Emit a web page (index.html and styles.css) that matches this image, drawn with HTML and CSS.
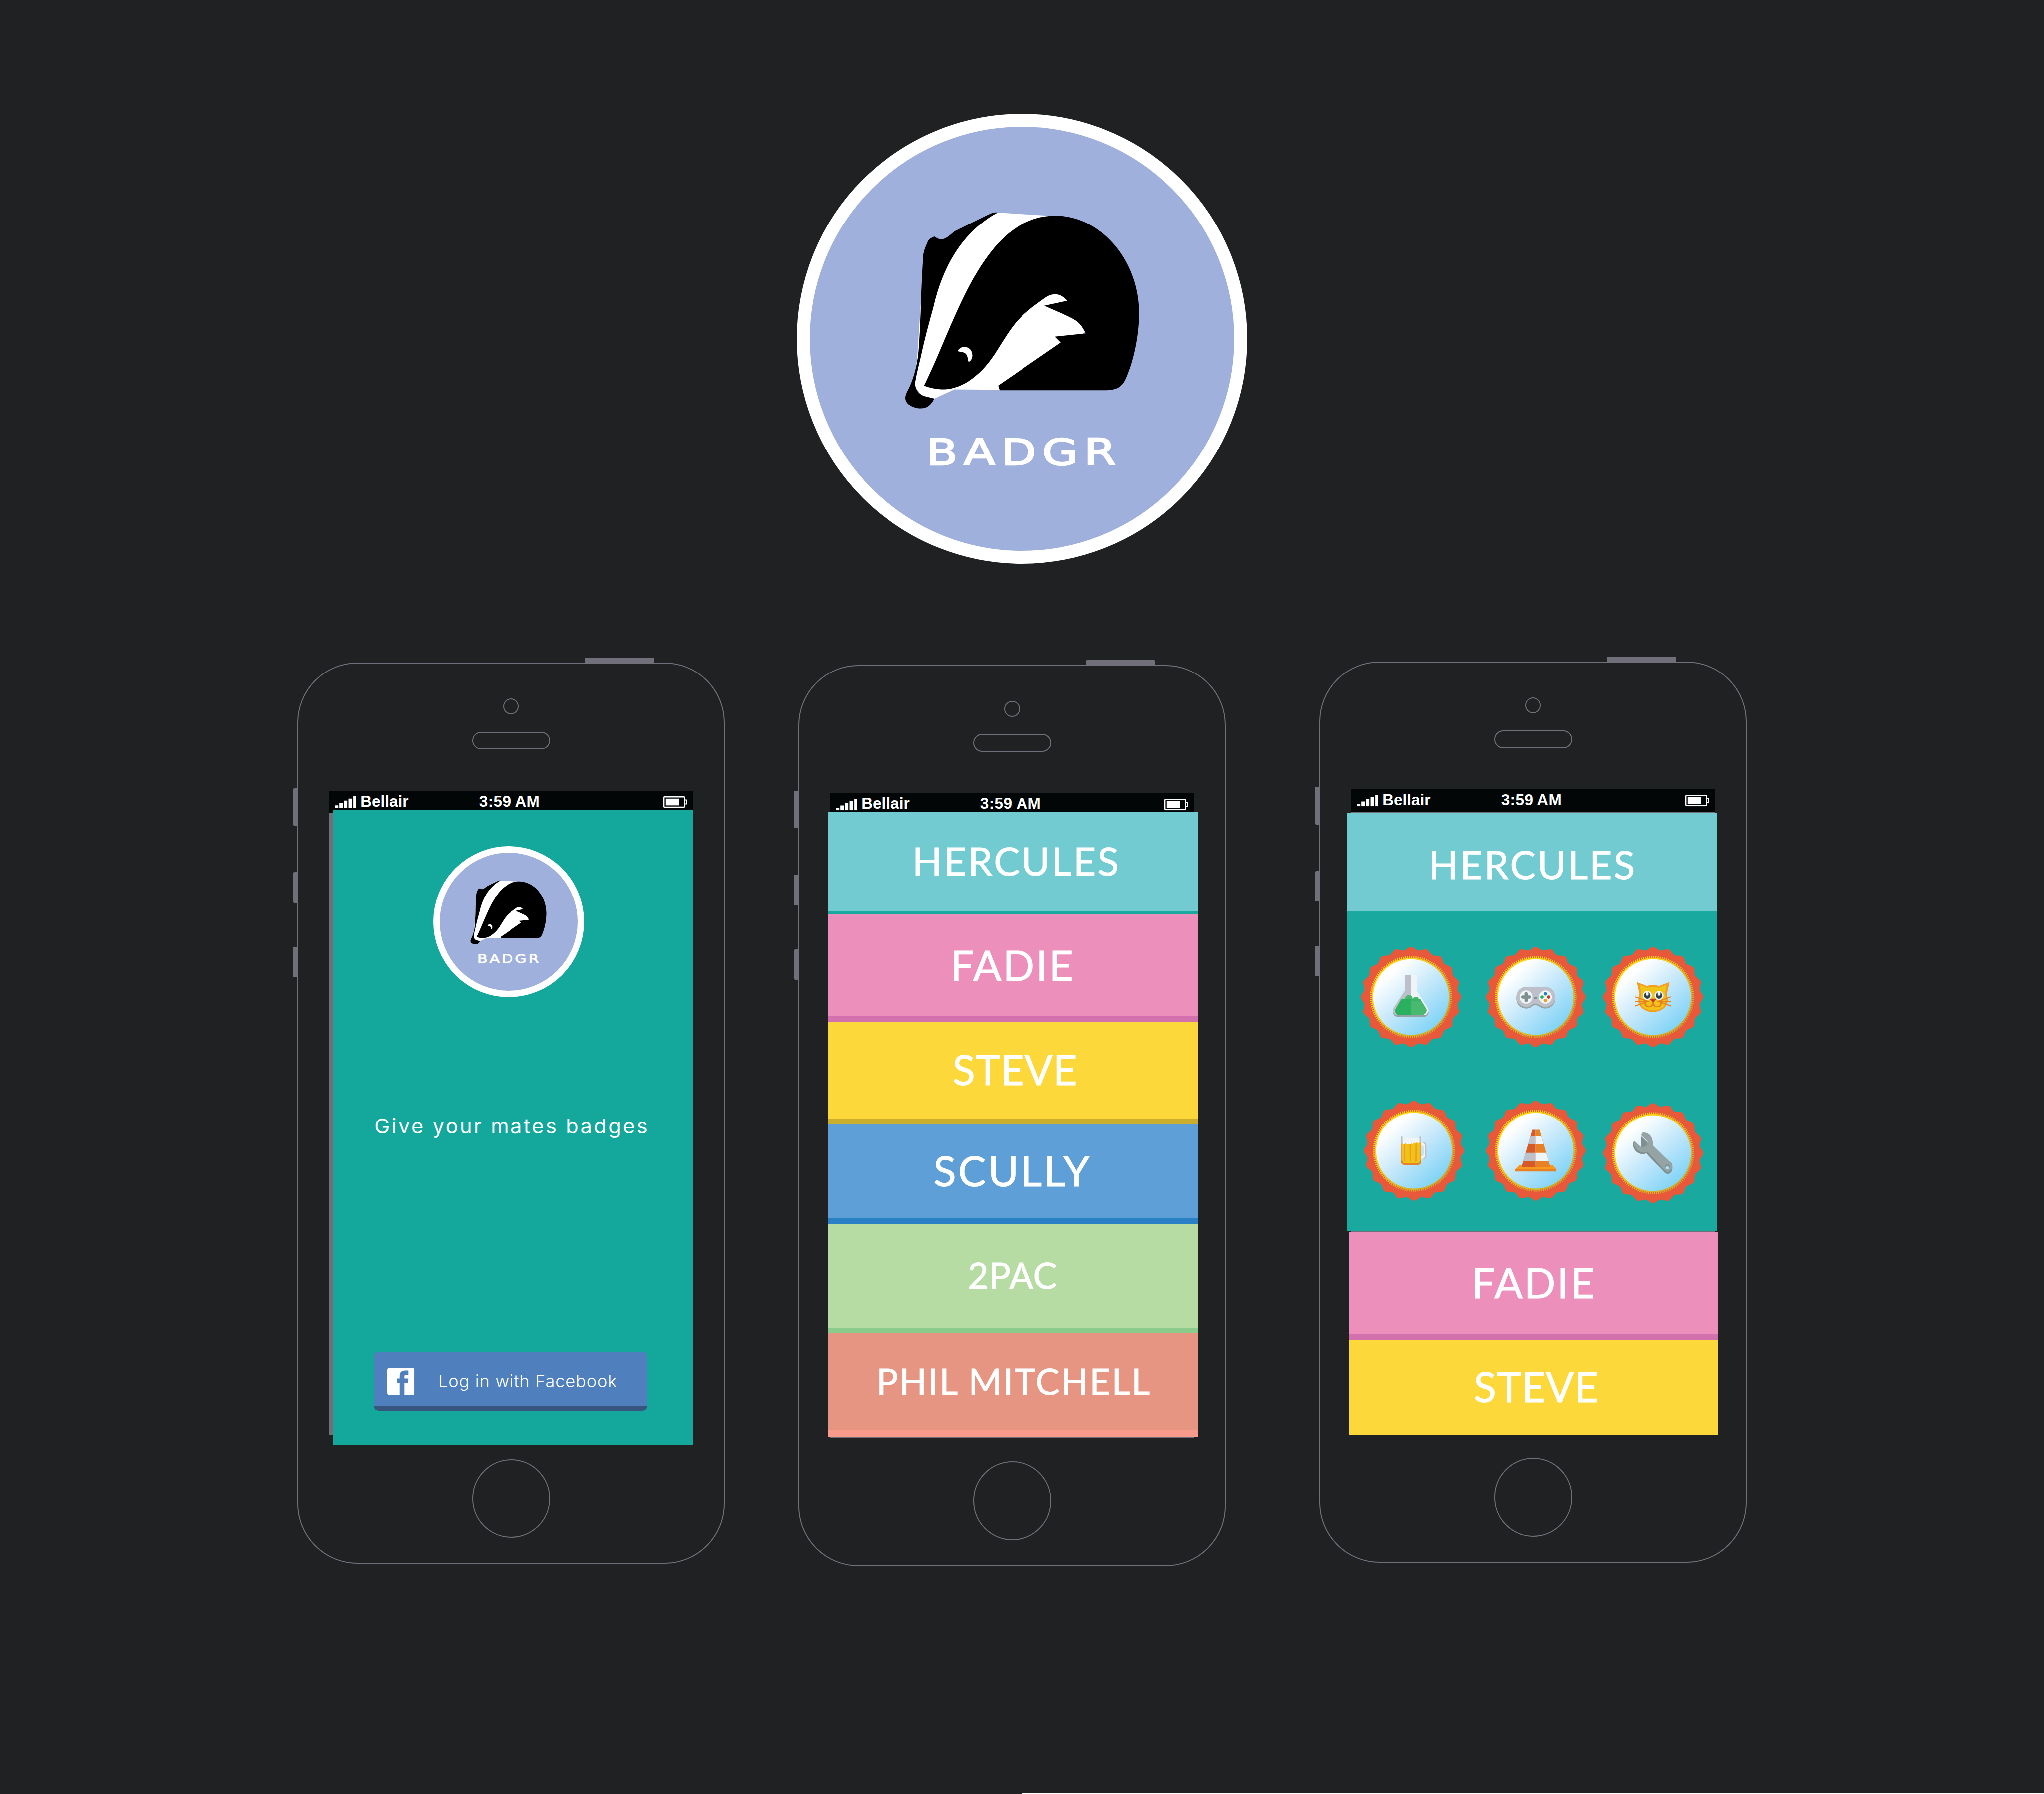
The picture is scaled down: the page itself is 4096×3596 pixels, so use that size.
FILE: index.html
```
<!DOCTYPE html>
<html lang="en">
<head>
<meta charset="utf-8">
<title>Badgr</title>
<link rel="stylesheet" href="styles.css">
</head>
<body>
<svg class="defs" aria-hidden="true">
  <defs>
    <linearGradient id="sky" x1="0.18" y1="0.12" x2="0.85" y2="0.88">
      <stop offset="0.08" stop-color="#fff"/><stop offset="0.5" stop-color="#c6e8fb"/><stop offset="1" stop-color="#7fd3f6"/>
    </linearGradient>
    <linearGradient id="gold" gradientUnits="userSpaceOnUse" x1="50" y1="50" x2="200" y2="200">
      <stop offset="0.1" stop-color="#fed614"/><stop offset="1" stop-color="#cbac2f"/>
    </linearGradient>
    <path id="tooth" d="M0 -90L-18.54 -117.04C-10.6 -118.3 -7 -125.6 0 -125.6S10.6 -118.3 18.54 -117.04Z"/>
    <g id="teeth5">
      <use href="#tooth"/><use href="#tooth" transform="rotate(18)"/><use href="#tooth" transform="rotate(36)"/><use href="#tooth" transform="rotate(54)"/><use href="#tooth" transform="rotate(72)"/>
    </g>
  </defs>

  <symbol id="badger" viewBox="0 0 660 700">
    <g transform="scale(.42091 .44643)">
      <path fill="#fff" d="M628 76L950 94L1200 700L800 1072L640 1072L370 1070L250 1122L180 1110L130 1050L148 885L168 600L190 330L380 200Z"/>
      <path d="M628 75C610 72 590 78 570 88L383 175C362 184 345 203 325 215C305 228 278 230 258 214C250 208 248 210 238 215C220 224 214 230 209 243C196 270 184 295 183 325C178 400 173 500 170 580C167 680 162 780 156 850C150 920 134 985 106 1048C95 1073 79 1093 77 1115C76 1132 83 1150 112 1164C135 1174 150 1177 170 1177C208 1177 230 1158 250 1122L187 1107C150 1095 133 1062 136 1030C146 970 165 910 178 850C200 760 220 690 245 605C300 380 415 185 628 75Z"/>
      <path d="M188 1050C260 915 310 785 390 620C560 265 740 88 985 93C1275 105 1474 375 1472 640C1472 780 1435 920 1395 1005C1372 1055 1345 1075 1265 1075H640L631 1049L1005 806L970 773L1154 755C1140 730 1125 700 1090 680C1050 656 980 630 907 599L1044 571C1025 552 1005 535 970 535C945 536 930 543 910 556C850 596 800 630 750 680C700 732 660 800 610 872C560 943 510 990 450 1027C380 1067 320 1072 290 1070C250 1068 220 1060 188 1050Z"/>
      <path fill="#fff" d="M391 850C400 838 415 831 430 831C458 832 477 852 477 878C477 895 470 907 459 914C455 915 452 913 451 908C450 895 447 880 440 872C430 860 405 859 395 857C390 856 389 853 391 850Z"/>
    </g>
    <text class="wordmark" transform="translate(84.3 667.8) scale(1.28 1)">BADGR</text>
  </symbol>

  <symbol id="rosette" viewBox="0 0 252 252">
    <g transform="translate(126 126)" fill="#e8583a">
      <use href="#teeth5"/><use href="#teeth5" transform="rotate(90)"/><use href="#teeth5" transform="rotate(180)"/><use href="#teeth5" transform="rotate(270)"/>
      <circle r="117"/>
    </g>
    <circle cx="126" cy="126" r="100.7" fill="none" stroke="url(#gold)" stroke-width="4.6" stroke-dasharray="2.636 2.636"/>
    <circle cx="126" cy="126" r="98.6" fill="url(#gold)"/>
    <circle cx="126" cy="126" r="95" fill="url(#sky)"/>
  </symbol>

  <symbol id="i-flask" viewBox="0 0 252 252">
    <g transform="translate(126 126) scale(.5995 .3333) translate(-270 -495)">
      <path fill="#94a3a6" d="M198 587C192 600 193 610 196 622C200 638 206 645 216 645H322C334 645 340 632 342 620C344 612 344 602 340 592L270 560Z"/>
      <path fill="#bdc0c8" d="M244 328H270V632H216C206 632 200 625 196 610C192 598 193 590 198 575L244 448Z"/>
      <path fill="#eff4f7" d="M270 328H294V448L340 578C344 590 344 600 342 608C337 626 333 632 322 632H270Z"/>
      <path fill="#2ab160" d="M230 509H270V629H218C211 629 209 622 206 614C201 602 202 596 205 586Z"/>
      <path fill="#49b96f" d="M270 509H308L333 580C337 592 336 602 332 612C328 624 325 629 318 629H270Z"/>
      <path fill="#49b96f" d="M245 509C246 470 276 470 277 509ZM278 509C279 487 301 487 302 509Z"/>
      <path fill="#2ab160" d="M270 509H309L312 524H270Z" opacity=".55"/>
    </g>
  </symbol>

  <symbol id="i-pad" viewBox="0 0 252 252">
    <g transform="translate(126 126) scale(.5995 .3333) translate(-794 -495)">
      <path fill="#95a5a8" transform="translate(0 12)" d="M752 420H835C862 420 876 455 876 495C876 540 858 570 833 570C813 570 810 545 793.500 545C777 545 774 570 755 570C730 570 712 540 712 495C712 455 726 420 752 420Z"/>
      <path fill="#bdc0c8" d="M752 420H835C862 420 876 455 876 495C876 540 858 570 833 570C813 570 810 545 793.500 545C777 545 774 570 755 570C730 570 712 540 712 495C712 455 726 420 752 420Z"/>
      <ellipse cx="752.500" cy="495" rx="27" ry="50" fill="#eff4f7"/><ellipse cx="835" cy="495" rx="27" ry="50" fill="#eff4f7"/>
      <rect x="746" y="458" width="13.500" height="75" rx="6" ry="11" fill="#7f8f90"/><rect x="732" y="483" width="41" height="24" rx="6" ry="11" fill="#7f8f90"/>
      <rect x="786" y="495" width="15" height="13" rx="5" ry="6" fill="#7f8f90"/>
      <ellipse cx="835" cy="471" rx="7" ry="12.500" fill="#2a80c1"/><ellipse cx="821" cy="495" rx="7" ry="12.500" fill="#2ab160"/><ellipse cx="848.500" cy="495" rx="7" ry="12.500" fill="#c23c2d"/><ellipse cx="835" cy="520" rx="7" ry="12.500" fill="#f79c1f"/>
    </g>
  </symbol>

  <symbol id="i-cat" viewBox="0 0 252 252">
    <g transform="translate(126 126) scale(.5995 .3333) translate(-1284 -495)">
      <path fill="#f79c1f" d="M1216 382L1258 411Q1284 399 1310 411L1353 382L1342 470C1345 500 1346 520 1345 535C1338 582 1312 607 1284 607C1256 607 1230 582 1223 535C1222 520 1223 500 1227 468Z"/>
      <path fill="#efc419" d="M1228 402L1260 424Q1284 411 1308 424L1341 402L1334 470C1338 500 1338 520 1335 545C1330 580 1305 595 1284 595C1263 595 1238 580 1233 545C1230 520 1230 500 1235 470Z"/>
      <g fill="none" stroke="#e88125" stroke-width="7.500">
        <path d="M1251 530C1250 560 1257 569 1266 569C1277 569 1284 555 1284 530C1284 555 1291 569 1302 569C1312 569 1318 560 1317 530"/>
        <path d="M1209 493L1262 528L1209 563M1209 528H1262M1359 493L1306 528L1359 563M1359 528H1306"/>
      </g>
      <path fill="#c23c2d" d="M1269 507H1300L1284.500 538Z"/>
      <ellipse cx="1260" cy="483" rx="19" ry="34" fill="#eff4f7"/><ellipse cx="1309" cy="483" rx="19" ry="34" fill="#eff4f7"/>
      <ellipse cx="1259.500" cy="483" rx="13.500" ry="25" fill="#2f3f52"/><ellipse cx="1309" cy="483" rx="13.500" ry="25" fill="#2f3f52"/>
      <ellipse cx="1259.500" cy="471" rx="6" ry="13" fill="#eff4f7"/><ellipse cx="1309" cy="471" rx="6" ry="13" fill="#eff4f7"/>
    </g>
  </symbol>

  <symbol id="i-beer" viewBox="0 0 252 252">
    <g transform="translate(126 126) scale(.5995 .3333) translate(-282 -508.500)">
      <path fill="#bdc0c8" fill-rule="evenodd" d="M310 444H320C330 444 334 460 334 475V545C334 560 328 573 320 573H310ZM310 466V550C318 550 322 545 322 530V485C322 472 318 466 310 466Z"/>
      <path fill="#eff4f7" fill-rule="evenodd" d="M310 444C323 444 328 458 328 475V545C328 560 323 571 310 571ZM310 466V550C318 550 322 545 322 530V485C322 472 318 466 310 466Z"/>
      <path fill="#eff4f7" d="M233 411H306V470H233Z"/>
      <path fill="#bdc0c8" d="M228 402H234V458H228ZM305 402H311V446H305Z"/>
      <path fill="#f79c1f" d="M228 456H234V600H228ZM305 444H311V600H305Z"/>
      <path fill="#e88125" d="M228 583V596Q230 614 240 615H300Q310 614 311 596V583Z"/>
      <path fill="#efc419" d="M234 456L240 461L246 451L250 460L263 461L272 455L277 460L282 446L289 455L294 443L299 452L306 448V590Q304 603 298 603H242Q235 603 234 590Z"/>
      <path fill="#f79c1f" d="M239 461H245L246 593Q241 590 239 580ZM263 461H269V588Q266 596 264 588ZM288 455H294V580Q293 590 287 593Z"/>
    </g>
  </symbol>

  <symbol id="i-cone" viewBox="0 0 252 252">
    <g transform="translate(126 126) scale(.5995 .3333) translate(-794 -509.500)">
      <path fill="#f9981f" d="M724 618H867L881 651H707Z"/><path fill="#e88125" d="M707 650H881V666H707Z"/>
      <path fill="#d65a28" d="M779 351H794V635H733Z"/><path fill="#e88125" d="M794 351H811L856 635H794Z"/>
      <path fill="#bfc1ca" d="M771 399H794V462H761ZM751 525H794V587H740Z"/><path fill="#eff4f7" d="M794 399H818L828 462H794ZM794 525H838L849 587H794Z"/>
    </g>
  </symbol>

  <symbol id="i-wrench" viewBox="0 0 252 252">
    <g transform="translate(126 126) scale(.5995 .3333) translate(-1285 -530.500)">
      <path fill="#7f8e8f" d="M1235 390L1236 404L1262 450L1284 480L1365 612C1367 640 1367 660 1360 674C1352 690 1340 689 1333 676L1256 530C1240 548 1212 530 1204 490C1200 470 1201 450 1206 436L1236 488Z"/>
      <path fill="#95a3a4" d="M1241 375C1268 371 1286 405 1284 470L1359 603C1367 622 1367 645 1359 660C1351 676 1340 673 1334 661L1262 520C1245 535 1222 520 1212 490C1204 470 1203 450 1207 437L1236 488L1257 476L1262 443L1235 395Z"/>
      <ellipse cx="1345" cy="634" rx="10" ry="18" fill="#7f8e8f"/><ellipse cx="1345" cy="641" rx="8" ry="11" fill="#abe0fa"/>
    </g>
  </symbol>

  <symbol id="i-facebook" viewBox="0 0 68 69">
    <path fill="#fff" fill-rule="evenodd" d="M6 0H62Q68 0 68 6V63Q68 69 62 69H43V37.500H52L53 27H43V21.500C43 19 44 18 46.500 18H53V7H45C35 7 31 12 31 21V27H24V37.500H31V69H6Q0 69 0 63V6Q0 0 6 0Z"/>
  </symbol>

  <symbol id="i-signal" viewBox="0 0 54 29">
    <path fill="#fff" d="M0 23H9V29H0ZM11.500 17H20.500V29H11.500ZM23 11H31.500V29H23ZM34.500 6H43.500V29H34.500ZM46.500 0H54V29H46.500Z"/>
  </symbol>
  <symbol id="i-battery" viewBox="0 0 60 29">
    <rect x="1.500" y="1.500" width="51.500" height="26" rx="1.500" fill="none" stroke="#fff" stroke-width="3"/>
    <rect x="6" y="6" width="34" height="17" fill="#fff"/>
    <path d="M54 9.500H58.500V19.500H54" fill="none" stroke="#fff" stroke-width="2.500"/>
  </symbol>
</svg>

<main class="board">
  <header class="hero">
    <div class="logo"><svg class="logo-art"><use href="#badger"/></svg></div>
    <div class="connector"></div>
  </header>

  <section class="phones">
    <article class="phone phone-login">
      <i class="btn power"></i><i class="btn mute"></i><i class="btn vol-up"></i><i class="btn vol-down"></i>
      <div class="camera"></div><div class="speaker"></div>
      <div class="screen">
        <div class="status"><svg class="signal"><use href="#i-signal"/></svg><span class="carrier">Bellair</span><span class="clock">3:59 AM</span><svg class="battery"><use href="#i-battery"/></svg></div>
        <div class="login">
          <div class="logo small"><svg class="logo-art"><use href="#badger"/></svg></div>
          <p class="tagline">Give your mates badges</p>
          <div class="fb-button"><svg class="fb-icon"><use href="#i-facebook"/></svg><span>Log in with Facebook</span></div>
        </div>
      </div>
      <div class="home"></div>
    </article>

    <article class="phone phone-list">
      <i class="btn power"></i><i class="btn mute"></i><i class="btn vol-up"></i><i class="btn vol-down"></i>
      <div class="camera"></div><div class="speaker"></div>
      <div class="screen">
        <div class="status"><svg class="signal"><use href="#i-signal"/></svg><span class="carrier">Bellair</span><span class="clock">3:59 AM</span><svg class="battery"><use href="#i-battery"/></svg></div>
        <ul class="mates">
          <li class="mate hercules">HERCULES</li>
          <li class="mate fadie">FADIE</li>
          <li class="mate steve">STEVE</li>
          <li class="mate scully">SCULLY</li>
          <li class="mate tupac">2PAC</li>
          <li class="mate phil">PHIL MITCHELL</li>
        </ul>
      </div>
      <div class="home"></div>
    </article>

    <article class="phone phone-badges">
      <i class="btn power"></i><i class="btn mute"></i><i class="btn vol-up"></i><i class="btn vol-down"></i>
      <div class="camera"></div><div class="speaker"></div>
      <div class="screen">
        <div class="status"><svg class="signal"><use href="#i-signal"/></svg><span class="carrier">Bellair</span><span class="clock">3:59 AM</span><svg class="battery"><use href="#i-battery"/></svg></div>
        <div class="mates open">
          <div class="mate hercules">HERCULES</div>
          <div class="badges">
            <svg class="badge"><use href="#rosette"/><use href="#i-flask"/></svg>
            <svg class="badge"><use href="#rosette"/><use href="#i-pad"/></svg>
            <svg class="badge"><use href="#rosette"/><use href="#i-cat"/></svg>
            <svg class="badge beer"><use href="#rosette"/><use href="#i-beer"/></svg>
            <svg class="badge"><use href="#rosette"/><use href="#i-cone"/></svg>
            <svg class="badge wrench"><use href="#rosette"/><use href="#i-wrench"/></svg>
          </div>
        </div>
        <ul class="mates rest">
          <li class="mate fadie">FADIE</li>
          <li class="mate steve">STEVE</li>
        </ul>
      </div>
      <div class="home"></div>
    </article>
  </section>

  <footer class="foot"><div class="foot-left"></div><div class="foot-right"></div></footer>
</main>
</body>
</html>
```
FILE: styles.css
```
/* 1rem = 100 design units */
html { font-size: 79.813px; }
* { box-sizing: border-box; margin: 0; padding: 0; }
body { background: #1f2122; font-family: Lato, "Liberation Sans", sans-serif; color: #fff; }
svg { display: block; overflow: visible; }
.defs { position: absolute; width: 0; height: 0; }

.board {
  width: 100vw; height: 100vh; overflow: hidden;
  display: flex; flex-direction: column;
  background:
    linear-gradient(#4d4e4f, #4d4e4f) 0 0 / 100% 1px no-repeat,
    linear-gradient(#4d4e4f, #4d4e4f) 0 0 / 1px 10.84rem no-repeat,
    #1f2122;
}

.hero { height: 15rem; padding-top: 2.857rem; display: flex; flex-direction: column; align-items: center; }
.logo {
  width: 11.3rem; height: 11.3rem; border-radius: 50%;
  background: #a0b0dc; border: .335rem solid #fff;
  display: flex; align-items: center; justify-content: center;
}
.logo-art { width: 6.6rem; height: 7rem; flex: none; transform: translate(.04rem, -.01rem); }
.wordmark {
  font: 400 90.5px "DejaVu Sans", sans-serif; letter-spacing: 11.6px;
  fill: #fff; stroke: #fff; stroke-width: 3px; stroke-linejoin: round;
}
.connector { width: 1px; flex: 1; margin-right: 1px; background: #4d4e4f; }

.phones { flex: 1; display: flex; align-items: flex-start; padding-left: 7.47rem; padding-top: 1.61rem; }
.phone {
  position: relative; flex: none; width: 10.72rem; height: 22.63rem;
  border: .03rem solid #716f7a; border-radius: 1.51rem;
  display: flex; flex-direction: column; align-items: center;
}
.phone-login { margin-top: .03rem; }
.phone-list { margin-left: 1.86rem; margin-top: .09rem; }
.phone-badges { margin-left: 2.36rem; }

.btn { position: absolute; background: #716f7a; }
.power { left: 7.19rem; top: -.15rem; width: 1.74rem; height: .15rem; border-radius: .04rem .04rem 0 0; }
.mute, .vol-up, .vol-down { left: -.145rem; width: .14rem; border-radius: .05rem 0 0 .05rem; }
.mute { top: 3.13rem; height: .94rem; }
.vol-up { top: 5.24rem; height: .77rem; }
.vol-down { top: 7.12rem; height: .76rem; }

.camera { margin-top: .88rem; width: .4rem; height: .4rem; border: .0255rem solid #716f7a; border-radius: 50%; flex: none; }
.speaker { margin: .43rem 0 0 .02rem; width: 1.97rem; height: .45rem; border: .0255rem solid #716f7a; border-radius: .225rem; flex: none; }
.screen { margin-top: 1.03rem; width: 9.12rem; height: 16.19rem; background: #716f7a; flex: none; }
.home { margin: .6rem 0 0 .02rem; width: 1.97rem; height: 1.97rem; border: .0255rem solid #716f7a; border-radius: 50%; flex: none; }

.status {
  height: .57rem; background: #030607; padding: .14rem .14rem 0;
  display: flex; align-items: flex-start;
  font: 700 .395rem/1 "Liberation Sans", Arial, sans-serif;
}
.signal { width: .54rem; height: .29rem; flex: none; }
.carrier, .clock { margin-top: -.065rem; white-space: nowrap; }
.carrier { margin-left: .1rem; width: 2.975rem; }
.clock { letter-spacing: .005rem; }
.battery { width: .6rem; height: .29rem; margin-left: auto; flex: none; }

/* login screen */
.login {
  margin: -.08rem 0 0 .09rem; position: relative; height: 15.95rem; background: #14a89d;
  display: flex; flex-direction: column; align-items: flex-start;
}
.logo.small { width: 3.8rem; height: 3.8rem; border-width: .17rem; margin: .905rem 0 0 2.51rem; }
.small .logo-art { width: 2.155rem; height: 2.286rem; transform: translate(.013rem, 0); }
.tagline {
  margin: 2.916rem 0 0 1.04rem; font: 400 .52rem/1.21 Inter, sans-serif;
  letter-spacing: .043rem; white-space: nowrap;
}
.fb-button {
  margin: 5.355rem 0 0 1.03rem; width: 6.86rem; height: 1.483rem; border-radius: .12rem;
  background: linear-gradient(#4f7fbd 1.363rem, #36567f 1.363rem);
  display: flex; align-items: flex-start; padding: .4rem 0 0 .33rem;
  font: 300 .43rem/1.21 Inter, sans-serif; letter-spacing: .0118rem; white-space: nowrap;
}
.fb-icon { width: .68rem; height: .69rem; flex: none; }
.fb-button span { margin: .085rem 0 0 .6rem; }

/* name rows */
.mates { position: relative; width: 9.27rem; margin: -.085rem 0 0 -.055rem; list-style: none; }
.mate { line-height: 1.2; font-weight: 400; white-space: nowrap; -webkit-text-stroke: .014rem #fff; }
.hercules { height: 2.57rem; padding: .635rem 0 0 2.11rem; font-size: .98rem; letter-spacing: .041rem; background: #71cbd0; border-bottom: .1rem solid #1aa99e; }
.fadie { height: 2.705rem; padding: .636rem 0 0 3.065rem; font-size: 1.05rem; letter-spacing: .037rem; background: #ec8fbb; border-bottom: .155rem solid #d271ad; }
.steve { height: 2.565rem; padding: .565rem 0 0 3.12rem; font-size: 1.04rem; letter-spacing: .012rem; background: #fdd83a; border-bottom: .16rem solid #ccae2d; }
.scully { height: 2.505rem; padding: .525rem 0 0 2.64rem; font-size: 1.045rem; letter-spacing: .052rem; background: #5e9fd8; border-bottom: .175rem solid #2a80c4; }
.tupac { height: 2.735rem; padding: .735rem 0 0 3.5rem; font-size: .9rem; letter-spacing: .012rem; background: #b6dba3; border-bottom: .15rem solid #8bcb8c; }
.phil { height: 2.605rem; padding: .664rem 0 0 1.21rem; font-size: .9rem; letter-spacing: .033rem; background: #e69583; border-bottom: .18rem solid #f99b8a; }

/* expanded badge list */
.mates.open { margin: .025rem 0 0 -.095rem; background: #1aa99e; height: 10.505rem; }
.open .hercules { height: 2.46rem; padding: .71rem 0 0 2.03rem; border-bottom: 0; }
.badges { display: grid; grid-template-columns: 3.13rem 2.945rem 2.52rem; grid-template-rows: 3.85rem 2.52rem; padding: .905rem 0 0 .335rem; }
.badge { width: 2.52rem; height: 2.52rem; }
.badge.beer { margin-left: .07rem; }
.badge.wrench { margin-top: .07rem; }
.mates.rest { margin: .02rem 0 0 -.05rem; width: 9.26rem; }
.rest .fadie { height: 2.695rem; padding-top: .628rem; border-bottom-width: .16rem; }
.rest .steve { height: 2.405rem; border-bottom: 0; }

.foot { height: 4.095rem; display: flex; }
.foot-left { width: 50%; border-right: 1px solid #4d4e4f; border-bottom: 1px solid #1f1518; }
.foot-right { width: 50%; border-bottom: 2px solid #fff; }
```
